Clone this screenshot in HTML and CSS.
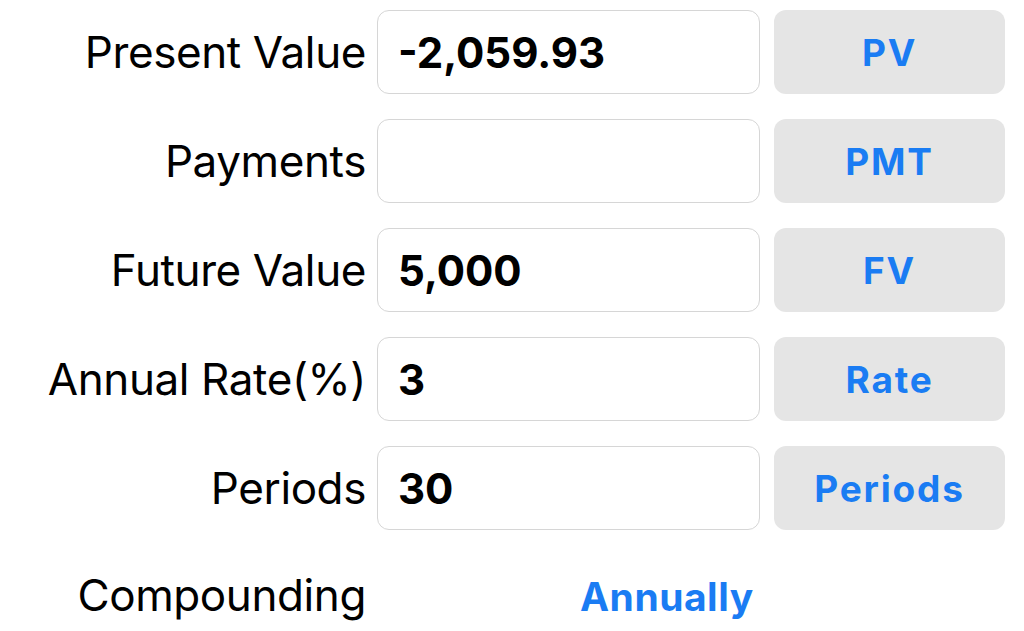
FILE: index.html
```html
<!DOCTYPE html>
<html>
<head>
<meta charset="utf-8">
<link rel="stylesheet" href="styles.css">
</head>
<body>
<div class="form">
  <div class="label">Present Value</div>
  <div class="field">-2,059.93</div>
  <div class="btn">PV</div>

  <div class="label">Payments</div>
  <div class="field"></div>
  <div class="btn">PMT</div>

  <div class="label">Future Value</div>
  <div class="field">5,000</div>
  <div class="btn">FV</div>

  <div class="label">Annual Rate(%)</div>
  <div class="field">3</div>
  <div class="btn">Rate</div>

  <div class="label">Periods</div>
  <div class="field">30</div>
  <div class="btn">Periods</div>

  <div class="label last">Compounding</div>
  <div class="choice">Annually</div>
</div>
</body>
</html>
```
FILE: styles.css
```css
html, body {
  margin: 0;
  padding: 0;
  background: #ffffff;
}
body {
  font-family: Inter, "Liberation Sans", sans-serif;
  color: #000;
}
.form {
  display: grid;
  grid-template-columns: 366px 394px 245px;
  grid-auto-rows: 84px;
  row-gap: 25px;
  padding-top: 10px;
  align-items: center;
}
.label {
  text-align: right;
  font-size: 44px;
  font-weight: 400;
  letter-spacing: -0.4px;
  white-space: nowrap;
}
.last {
  margin-bottom: 5px;
}
.field {
  margin-left: 11px;
  height: 84px;
  box-sizing: border-box;
  border: 1px solid #d6d6d6;
  border-radius: 12px;
  display: flex;
  align-items: center;
  padding-left: 20px;
  font-size: 42px;
  font-weight: 700;
}
.btn {
  margin-left: 14px;
  height: 84px;
  background: #e5e5e5;
  border-radius: 12px;
  display: flex;
  align-items: center;
  justify-content: center;
  color: #1a7cf3;
  font-size: 37px;
  font-weight: 700;
  letter-spacing: 1.8px;
}
.choice {
  padding-left: 214px;
  margin-bottom: 2px;
  color: #1a7cf3;
  font-size: 39px;
  font-weight: 700;
  letter-spacing: 0.5px;
  white-space: nowrap;
}
```
